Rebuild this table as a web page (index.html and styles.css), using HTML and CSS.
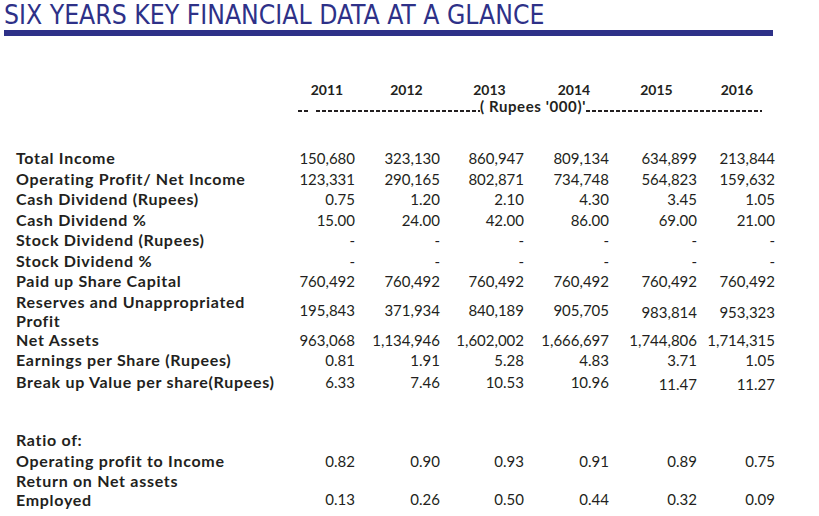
FILE: index.html
```html
<!DOCTYPE html>
<html lang="en">
<head>
  <meta charset="UTF-8">
  <meta name="viewport" content="width=device-width, initial-scale=1.0">
  <title>Six Years Key Financial Data</title>
  <link rel="stylesheet" href="styles.css">
</head>
<body>
  <div class="page">
    <h1 class="title">SIX YEARS KEY FINANCIAL DATA AT A GLANCE</h1>
    <div class="title-rule"></div>

    <div class="years">
      <span>2011</span>
      <span>2012</span>
      <span>2013</span>
      <span>2014</span>
      <span>2015</span>
      <span>2016</span>
    </div>
    <div class="units">
      <span class="dash dash-lead"></span>
      <span class="dash dash-left"></span>
      <span class="units-label">( Rupees '000)'</span>
      <span class="dash dash-right"></span>
    </div>

    <table class="data">
      <colgroup>
        <col class="col-label">
        <col class="col-1">
        <col class="col-2">
        <col class="col-3">
        <col class="col-4">
        <col class="col-5">
        <col class="col-6">
      </colgroup>
      <tbody>
        <tr><th>Total Income</th><td>150,680</td><td>323,130</td><td>860,947</td><td>809,134</td><td>634,899</td><td>213,844</td></tr>
        <tr><th>Operating Profit/ Net Income</th><td>123,331</td><td>290,165</td><td>802,871</td><td>734,748</td><td>564,823</td><td>159,632</td></tr>
        <tr><th>Cash Dividend (Rupees)</th><td>0.75</td><td>1.20</td><td>2.10</td><td>4.30</td><td>3.45</td><td>1.05</td></tr>
        <tr><th>Cash Dividend %</th><td>15.00</td><td>24.00</td><td>42.00</td><td>86.00</td><td>69.00</td><td>21.00</td></tr>
        <tr><th>Stock Dividend (Rupees)</th><td>-</td><td>-</td><td>-</td><td>-</td><td>-</td><td>-</td></tr>
        <tr><th>Stock Dividend %</th><td>-</td><td>-</td><td>-</td><td>-</td><td>-</td><td>-</td></tr>
        <tr><th>Paid up Share Capital</th><td>760,492</td><td>760,492</td><td>760,492</td><td>760,492</td><td>760,492</td><td>760,492</td></tr>
        <tr class="two-line"><th>Reserves and Unappropriated<br>Profit</th><td>195,843</td><td>371,934</td><td>840,189</td><td>905,705</td><td class="low">983,814</td><td class="low">953,323</td></tr>
        <tr><th>Net Assets</th><td>963,068</td><td>1,134,946</td><td>1,602,002</td><td>1,666,697</td><td>1,744,806</td><td>1,714,315</td></tr>
        <tr><th>Earnings per Share (Rupees)</th><td>0.81</td><td>1.91</td><td>5.28</td><td>4.83</td><td>3.71</td><td>1.05</td></tr>
        <tr><th>Break up Value per share(Rupees)</th><td>6.33</td><td>7.46</td><td>10.53</td><td>10.96</td><td class="low">11.47</td><td class="low">11.27</td></tr>
      </tbody>
      <tbody class="ratios">
        <tr><th>Ratio of:</th><td></td><td></td><td></td><td></td><td></td><td></td></tr>
        <tr><th>Operating profit to Income</th><td>0.82</td><td>0.90</td><td>0.93</td><td>0.91</td><td>0.89</td><td>0.75</td></tr>
        <tr class="two-line bottom"><th>Return on Net assets<br>Employed</th><td>0.13</td><td>0.26</td><td>0.50</td><td>0.44</td><td>0.32</td><td>0.09</td></tr>
      </tbody>
    </table>
  </div>
</body>
</html>
```

FILE: styles.css
```css
body {
  margin: 0;
  padding: 0;
  background: #ffffff;
  color: #231f20;
  font-family: Lato, "Open Sans", sans-serif;
}

.page {
  width: 819px;
  height: 516px;
  overflow: hidden;
}

.title {
  margin: 0;
  padding: 1px 0 0 4px;
  font-family: "DejaVu Sans", Verdana, sans-serif;
  font-stretch: condensed;
  font-size: 26.3px;
  font-weight: normal;
  line-height: 29px;
  color: #2e3188;
}

.title-rule {
  width: 769px;
  height: 6px;
  margin-left: 4px;
  background: #2e3188;
}

.years {
  display: grid;
  grid-template-columns: 78px 81px 85px 84px 81px 80px;
  margin: 47px 0 0 288px;
  width: 489px;
  font-size: 14px;
  font-weight: 700;
  line-height: 14px;
  text-align: center;
}

.units {
  display: flex;
  align-items: center;
  width: 464px;
  margin: 0 0 0 298px;
  font-size: 15px;
  font-weight: 700;
  line-height: 18px;
  white-space: nowrap;
}

.dash {
  height: 2px;
  margin-top: 9px;
  background: repeating-linear-gradient(90deg, #231f20 0 4px, transparent 4px 6px);
}

.dash-lead {
  width: 10px;
  margin-right: 8px;
}

.dash-left {
  width: 164px;
}

.dash-right {
  flex: 1;
}

.units-label {
  letter-spacing: 0.6px;
}

.data {
  margin: 33px 0 0 16px;
  width: 759px;
  table-layout: fixed;
  border-collapse: collapse;
  font-size: 15px;
}

.col-label { width: 269px; }
.col-1 { width: 70px; }
.col-2 { width: 85px; }
.col-3 { width: 84px; }
.col-4 { width: 85px; }
.col-5 { width: 88px; }
.col-6 { width: 78px; }

.data th,
.data td {
  padding: 0;
  line-height: 20.5px;
  vertical-align: middle;
}

.data th {
  text-align: left;
  font-size: 16px;
  font-weight: 700;
  letter-spacing: 0.7px;
  white-space: nowrap;
}

.data td {
  text-align: right;
  white-space: nowrap;
}

.data tr.two-line th {
  line-height: 19px;
}

.data td.low {
  padding-top: 3px;
}

.ratios tr:first-child th {
  padding-top: 36px;
}

.ratios tr.bottom td {
  vertical-align: bottom;
}
```
